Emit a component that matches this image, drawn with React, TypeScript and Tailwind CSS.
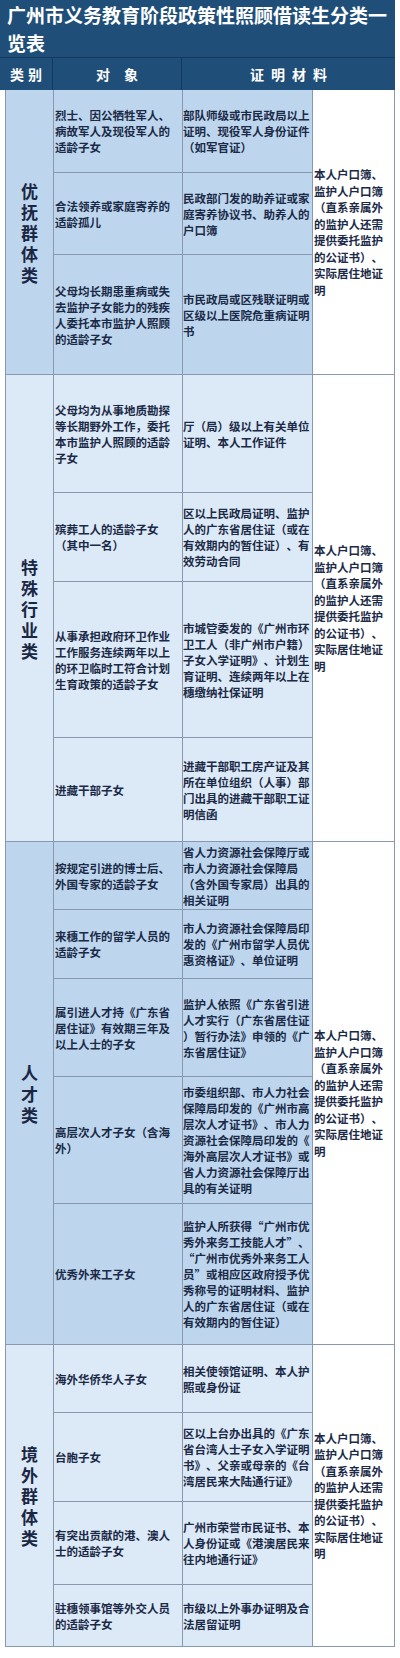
import React from 'react';

type Row = { h: string; obj: string[]; mat: string[] };
type Section = { cat: string; bg: string; rows: Row[] };

const lastCol = [
    '本人户口簿、',
    '监护人户口簿',
    '（直系亲属外',
    '的监护人还需',
    '提供委托监护',
    '的公证书）、',
    '实际居住地证',
    '明',
];

const sections: Section[] = [
    {
        cat: '优抚群体类',
        bg: 'bg-[#bdd6ed]',
        rows: [
            {
                h: 'h-[83px]',
                obj: ['烈士、因公牺牲军人、', '病故军人及现役军人的', '适龄子女'],
                mat: ['部队师级或市民政局以上', '证明、现役军人身份证件', '（如军官证）'],
            },
            {
                h: 'h-[82px]',
                obj: ['合法领养或家庭寄养的', '适龄孤儿'],
                mat: ['民政部门发的助养证或家', '庭寄养协议书、助养人的', '户口簿'],
            },
            {
                h: 'h-[119px]',
                obj: ['父母均长期患重病或失', '去监护子女能力的残疾', '人委托本市监护人照顾', '的适龄子女'],
                mat: ['市民政局或区残联证明或', '区级以上医院危重病证明', '书'],
            },
        ],
    },
    {
        cat: '特殊行业类',
        bg: 'bg-[#dce9f6]',
        rows: [
            {
                h: 'h-[118px]',
                obj: ['父母均为从事地质勘探', '等长期野外工作，委托', '本市监护人照顾的适龄', '子女'],
                mat: ['厅（局）级以上有关单位', '证明、本人工作证件'],
            },
            {
                h: 'h-[89px]',
                obj: ['殡葬工人的适龄子女', '（其中一名）'],
                mat: ['区以上民政局证明、监护', '人的广东省居住证（或在', '有效期内的暂住证）、有', '效劳动合同'],
            },
            {
                h: 'h-[156px]',
                obj: ['从事承担政府环卫作业', '工作服务连续两年以上', '的环卫临时工符合计划', '生育政策的适龄子女'],
                mat: ['市城管委发的《广州市环', '卫工人（非广州市户籍）', '子女入学证明》、计划生', '育证明、连续两年以上在', '穗缴纳社保证明'],
            },
            {
                h: 'h-[103px]',
                obj: ['进藏干部子女'],
                mat: ['进藏干部职工房产证及其', '所在单位组织（人事）部', '门出具的进藏干部职工证', '明信函'],
            },
        ],
    },
    {
        cat: '人才类',
        bg: 'bg-[#bdd6ed]',
        rows: [
            {
                h: 'h-[68px]',
                obj: ['按规定引进的博士后、', '外国专家的适龄子女'],
                mat: ['省人力资源社会保障厅或', '市人力资源社会保障局', '（含外国专家局）出具的', '相关证明'],
            },
            {
                h: 'h-[69px]',
                obj: ['来穗工作的留学人员的', '适龄子女'],
                mat: ['市人力资源社会保障局印', '发的《广州市留学人员优', '惠资格证》、单位证明'],
            },
            {
                h: 'h-[98px]',
                obj: ['属引进人才持《广东省', '居住证》有效期三年及', '以上人士的子女'],
                mat: ['监护人依照《广东省引进', '人才实行（广东省居住证', '）暂行办法》申领的《广', '东省居住证》'],
            },
            {
                h: 'h-[127px]',
                obj: ['高层次人才子女（含海', '外）'],
                mat: ['市委组织部、市人力社会', '保障局印发的《广州市高', '层次人才证书》、市人力', '资源社会保障局印发的《', '海外高层次人才证书》或', '省人力资源社会保障厅出', '具的有关证明'],
            },
            {
                h: 'h-[140px]',
                obj: ['优秀外来工子女'],
                mat: ['监护人所获得“广州市优', '秀外来务工技能人才”、', '“广州市优秀外来务工人', '员”或相应区政府授予优', '秀称号的证明材料、监护', '人的广东省居住证（或在', '有效期内的暂住证）'],
            },
        ],
    },
    {
        cat: '境外群体类',
        bg: 'bg-[#dce9f6]',
        rows: [
            {
                h: 'h-[68px]',
                obj: ['海外华侨华人子女'],
                mat: ['相关使领馆证明、本人护', '照或身份证'],
            },
            {
                h: 'h-[89px]',
                obj: ['台胞子女'],
                mat: ['区以上台办出具的《广东', '省台湾人士子女入学证明', '书》、父亲或母亲的《台', '湾居民来大陆通行证》'],
            },
            {
                h: 'h-[83px]',
                obj: ['有突出贡献的港、澳人', '士的适龄子女'],
                mat: ['广州市荣誉市民证书、本', '人身份证或《港澳居民来', '往内地通行证》'],
            },
            {
                h: 'h-[61px]',
                obj: ['驻穗领事馆等外交人员', '的适龄子女'],
                mat: ['市级以上外事办证明及合', '法居留证明'],
            },
        ],
    },
];

function Lines({ lines }: { lines: string[] }) {
    return (
        <div>
            {lines.map((l, i) => (
                <div key={i} className="whitespace-nowrap">{l}</div>
            ))}
        </div>
    );
}

export default function App() {
    return (
        <div
            className="w-[400px] bg-white pb-[10px] text-[#1b2a47] font-bold [text-spacing-trim:space-all] [font-feature-settings:'halt'_0]"
            style={{ fontFamily: '"Noto Sans CJK SC", "Noto Sans", sans-serif' }}
        >
            {/* Title */}
            <div className="w-[395px] bg-[#1f4e79] text-white text-[19px] leading-[28px] pl-[7px] pt-[1px] h-[58px] border-b border-[#123a60]">
                广州市义务教育阶段政策性照顾借读生分类一
                <br />
                览表
            </div>

            {/* Header */}
            <div className="w-[395px] h-[32px] flex bg-[#1f4e79] text-white text-[14px]">
                <div className="w-[53px] border-r border-[#123a60] flex items-center justify-center tracking-[4px] pl-[4px]">类别</div>
                <div className="w-[129px] border-r border-[#123a60] flex items-center justify-center">对　象</div>
                <div className="flex-1 flex items-center justify-center tracking-[7px] pl-[7px]">证明材料</div>
            </div>

            {/* Body */}
            <div className="ml-[5px] w-[390px] border-x border-[#8898ae] text-[11.5px] leading-[16px]">
                {sections.map((s) => (
                    <div key={s.cat} className="flex border-b border-[#8898ae]">
                        <div className={`w-[48px] border-r border-[#8898ae] ${s.bg} flex items-center justify-center`}>
                            <div className="w-[18px] text-[17px] leading-[21px] text-center text-[#1a2744]">{s.cat}</div>
                        </div>
                        <div className={`w-[259px] flex flex-col ${s.bg}`}>
                            {s.rows.map((r, i) => (
                                <div
                                    key={i}
                                    className={`flex ${r.h} ${i < s.rows.length - 1 ? 'border-b border-[#8898ae]' : ''}`}
                                >
                                    <div className="w-[129px] border-r border-[#8898ae] flex items-center pl-[1px]">
                                        <Lines lines={r.obj} />
                                    </div>
                                    <div className="w-[130px] border-r border-[#8898ae] flex items-center">
                                        <Lines lines={r.mat} />
                                    </div>
                                </div>
                            ))}
                        </div>
                        <div className="flex-1 bg-white flex items-center pl-[1px] leading-[16.5px]">
                            <Lines lines={lastCol} />
                        </div>
                    </div>
                ))}
            </div>
        </div>
    );
}
